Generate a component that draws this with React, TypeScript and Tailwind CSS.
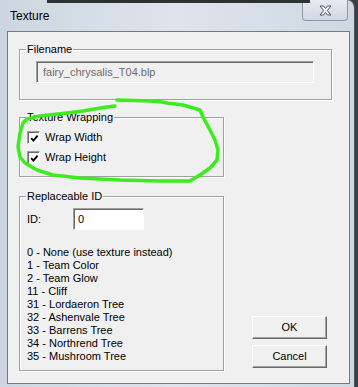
import React from 'react';

const legendCls =
  'absolute -top-[8px] left-[6px] bg-[#f0f0f0] px-[1px] text-[11px] leading-[14px] text-black';

function GroupBox({ title, className, children }: { title: string; className: string; children?: React.ReactNode }) {
  return (
    <div
      className={`relative border border-[#a0a0a0] shadow-[inset_1px_1px_0_#ffffff,1px_1px_0_#ffffff] ${className}`}
    >
      <span className={legendCls}>{title}</span>
      {children}
    </div>
  );
}

function CheckRow({ label }: { label: string }) {
  return (
    <div className="flex items-center gap-[5px]">
      <div className="flex h-[13px] w-[13px] items-center justify-center border border-t-[#a0a0a0] border-l-[#a0a0a0] border-r-white border-b-white bg-white shadow-[inset_1px_1px_0_#696969]">
        <svg width="9" height="9" viewBox="0 0 9 9" className="ml-[1px] mt-[1px]">
          <path d="M1.2 4.2 L3.4 6.6 L7.6 1.6" fill="none" stroke="#000" strokeWidth="1.9" />
        </svg>
      </div>
      <span className="text-[11px] leading-[13px]">{label}</span>
    </div>
  );
}

function ClassicButton({ label }: { label: string }) {
  return (
    <div className="flex h-[23px] w-[75px] items-center justify-center border border-t-white border-l-white border-r-[#696969] border-b-[#696969] bg-[#f0f0f0] text-[11px] shadow-[inset_-1px_-1px_0_#a0a0a0]">
      {label}
    </div>
  );
}

const ids = [
  '0 - None (use texture instead)',
  '1 - Team Color',
  '2 - Team Glow',
  '11 - Cliff',
  '31 - Lordaeron Tree',
  '32 - Ashenvale Tree',
  '33 - Barrens Tree',
  '34 - Northrend Tree',
  '35 - Mushroom Tree',
];

export default function App() {
  return (
    <div className="relative h-[387px] w-[358px] overflow-hidden bg-[#3a4140] font-['Liberation_Sans',Arial,sans-serif] text-black">
      {/* window */}
      <div className="flex h-[387px] w-[355px] flex-col rounded-tr-[8px] border-r border-[#4a525c] bg-gradient-to-r from-[#cdd6e0] via-[#dde4ec] to-[#cfd8e2]">
        {/* title bar */}
        <div className="flex h-[31px] items-start">
          <span className="ml-[10px] mt-[8px] text-[12px] leading-[16px]">Texture</span>
          <div className="ml-auto mr-[6px] flex h-[21px] w-[46px] items-center justify-center rounded-b-[4px] border border-t-0 border-[#8d99a6] bg-gradient-to-b from-[#e4eaf1] to-[#cfd8e2]">
            <svg width="13" height="11" viewBox="0 0 13 11">
              <path
                d="M1 1 H4.5 L6.5 3.5 L8.5 1 H12 L8.3 5.5 L12 10 H8.5 L6.5 7.5 L4.5 10 H1 L4.7 5.5 Z"
                fill="#f4f6f8"
                stroke="#4f5660"
                strokeWidth="1"
                strokeLinejoin="round"
              />
            </svg>
          </div>
        </div>

        {/* client */}
        <div className="mb-[3px] ml-[7px] mr-[4px] flex-1 border border-[#6f7a86] bg-[#f0f0f0] pl-[11px] pt-[17px]">
          <GroupBox title="Filename" className="h-[51px] w-[313px]">
            <div className="ml-[16px] mt-[11px] flex h-[22px] w-[278px] items-center border border-t-[#a0a0a0] border-l-[#a0a0a0] border-r-white border-b-white bg-[#f0f0f0] pl-[6px] text-[11px] text-[#6d6d6d] shadow-[inset_1px_1px_0_#696969]">
              fairy_chrysalis_T04.blp
            </div>
          </GroupBox>

          <div className="flex items-end">
            <div className="flex w-[205px] flex-col">
              <GroupBox title="Texture Wrapping" className="mt-[17px] h-[60px] w-[205px]">
                <div className="ml-[7px] mt-[13px] flex flex-col gap-[7px]">
                  <CheckRow label="Wrap Width" />
                  <CheckRow label="Wrap Height" />
                </div>
              </GroupBox>

              <GroupBox title="Replaceable ID" className="mt-[19px] h-[175px] w-[205px]">
                <div className="ml-[7px] mt-[11px] flex items-center">
                  <span className="w-[46px] text-[11px]">ID:</span>
                  <div className="flex h-[22px] w-[71px] items-center border border-t-[#a0a0a0] border-l-[#a0a0a0] border-r-white border-b-white bg-white pl-[4px] text-[11px] shadow-[inset_1px_1px_0_#696969]">
                    0
                  </div>
                </div>
                <div className="ml-[7px] mt-[16px] flex flex-col">
                  {ids.map((t) => (
                    <span key={t} className="text-[11px] leading-[13px]">
                      {t}
                    </span>
                  ))}
                </div>
              </GroupBox>
            </div>

            <div className="ml-[28px] flex flex-col gap-[6px] pb-[3px]">
              <ClassicButton label="OK" />
              <ClassicButton label="Cancel" />
            </div>
          </div>
        </div>
      </div>

      {/* dark strip of the window behind */}
      <div className="absolute left-[47px] top-0 h-[3px] w-[263px] bg-[#2e3232]" />

      {/* hand-drawn green annotation */}
      <svg className="pointer-events-none absolute left-0 top-0" width="358" height="387" viewBox="0 0 358 387">
        <path
          d="M115 106 L100 108 L83 111 L67 113 L40 116 L27 119 L23 123 L20 133 L18 147 L20 157 L25 163 L37 170 L53 175 L80 178 L120 180 L160 181 L190 181 L200 175 L210 168 L217 160 L218 150 L215 140 L210 130 L203 117 L200 110 L183 105 L167 103 L162 102 L150 101 L117 100"
          fill="none"
          stroke="#3cec1c"
          strokeWidth="3.5"
          strokeLinecap="round"
          strokeLinejoin="round"
        />
      </svg>
    </div>
  );
}
